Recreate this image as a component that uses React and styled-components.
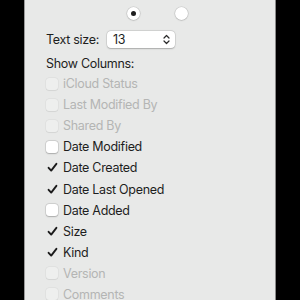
import React from "react";
import styled, { createGlobalStyle } from "styled-components";

const Global = createGlobalStyle`
  html, body { margin: 0; padding: 0; background: #000; }
  body { font-family: Inter, "Noto Sans", "Liberation Sans", sans-serif; -webkit-font-smoothing: antialiased; }
`;

const Page = styled.div`
  width: 300px;
  height: 300px;
  overflow: hidden;
  background: #000;
  display: flex;
  justify-content: flex-start;
  padding-left: 24px;
  box-sizing: border-box;
`;

const Panel = styled.div`
  width: 252px;
  height: 320px;
  box-sizing: border-box;
  background: #e8e9e8;
  border-left: 1px solid #9a9a9a;
  border-right: 1px solid #8a8a8a;
  padding: 7px 0 0 21px;
  display: flex;
  flex-direction: column;
  color: #1e1e1e;
  font-size: 12.5px;
  letter-spacing: -0.3px;
`;

const RadioRow = styled.div`
  display: flex;
  gap: 35px;
  padding-left: 81px;
  height: 13px;
`;

const Radio = styled.div`
  width: 13px;
  height: 13px;
  border-radius: 50%;
  background: #fff;
  box-shadow: 0 0 0 0.5px rgba(0,0,0,0.12), 0 0.5px 1.5px rgba(0,0,0,0.2);
  display: flex;
  align-items: center;
  justify-content: center;
  &::after {
    content: "";
    width: 5px;
    height: 5px;
    border-radius: 50%;
    background: ${p => (p.$on ? "#1e1e1e" : "transparent")};
  }
`;

const SizeRow = styled.div`
  display: flex;
  align-items: center;
  margin-top: 11px;
  height: 17px;
`;

const Label = styled.span`
  width: 61px;
  line-height: 17px;
`;

const Popup = styled.div`
  width: 68px;
  height: 17px;
  box-sizing: border-box;
  background: #fff;
  border-radius: 4px;
  box-shadow: 0 0 0 0.5px rgba(0,0,0,0.12), 0 0.5px 1.5px rgba(0,0,0,0.22);
  display: flex;
  align-items: center;
  justify-content: space-between;
  padding: 0 5px 0 6px;
  line-height: 17px;
`;

const Heading = styled.div`
  margin-top: 8px;
  line-height: 16px;
`;

const List = styled.div`
  display: flex;
  flex-direction: column;
  margin-top: 1px;
`;

const Row = styled.div`
  display: flex;
  align-items: center;
  height: 21.1px;
  gap: 5px;
  color: ${p => (p.$disabled ? "#b4b5b4" : "#1e1e1e")};
`;

const Box = styled.div`
  width: 12px;
  height: 12px;
  border-radius: 3px;
  box-sizing: border-box;
  display: flex;
  align-items: center;
  justify-content: center;
  background: ${p => (p.$disabled ? "#eeefee" : p.$checked ? "transparent" : "#fff")};
  box-shadow: ${p =>
    p.$disabled
      ? "0 0 0 0.5px rgba(0,0,0,0.06), 0 0.5px 1px rgba(0,0,0,0.06)"
      : p.$checked
      ? "none"
      : "0 0 0 0.5px rgba(0,0,0,0.15), 0 0.5px 1.5px rgba(0,0,0,0.2)"};
`;

const Check = () => (
  <svg width="11" height="11" viewBox="0 0 11 11">
    <path d="M1.6 5.8 L4.2 8.6 L9.4 1.8" fill="none" stroke="#1b1b1b" strokeWidth="1.9" strokeLinecap="round" strokeLinejoin="round" />
  </svg>
);

const Chevrons = () => (
  <svg width="7" height="11" viewBox="0 0 7 11">
    <path d="M1 4 L3.5 1.5 L6 4 M1 7 L3.5 9.5 L6 7" fill="none" stroke="#2a2a2a" strokeWidth="1.2" strokeLinecap="round" strokeLinejoin="round" />
  </svg>
);

const columns = [
  { name: "iCloud Status", disabled: true },
  { name: "Last Modified By", disabled: true },
  { name: "Shared By", disabled: true },
  { name: "Date Modified" },
  { name: "Date Created", checked: true },
  { name: "Date Last Opened", checked: true },
  { name: "Date Added" },
  { name: "Size", checked: true },
  { name: "Kind", checked: true },
  { name: "Version", disabled: true },
  { name: "Comments", disabled: true },
];

export default function App() {
  return (
    <>
      <Global />
      <Page>
        <Panel>
          <RadioRow>
            <Radio $on />
            <Radio />
          </RadioRow>
          <SizeRow>
            <Label>Text size:</Label>
            <Popup>
              <span>13</span>
              <Chevrons />
            </Popup>
          </SizeRow>
          <Heading>Show Columns:</Heading>
          <List>
            {columns.map(c => (
              <Row key={c.name} $disabled={c.disabled}>
                <Box $disabled={c.disabled} $checked={c.checked}>
                  {c.checked && <Check />}
                </Box>
                <span>{c.name}</span>
              </Row>
            ))}
          </List>
        </Panel>
      </Page>
    </>
  );
}
